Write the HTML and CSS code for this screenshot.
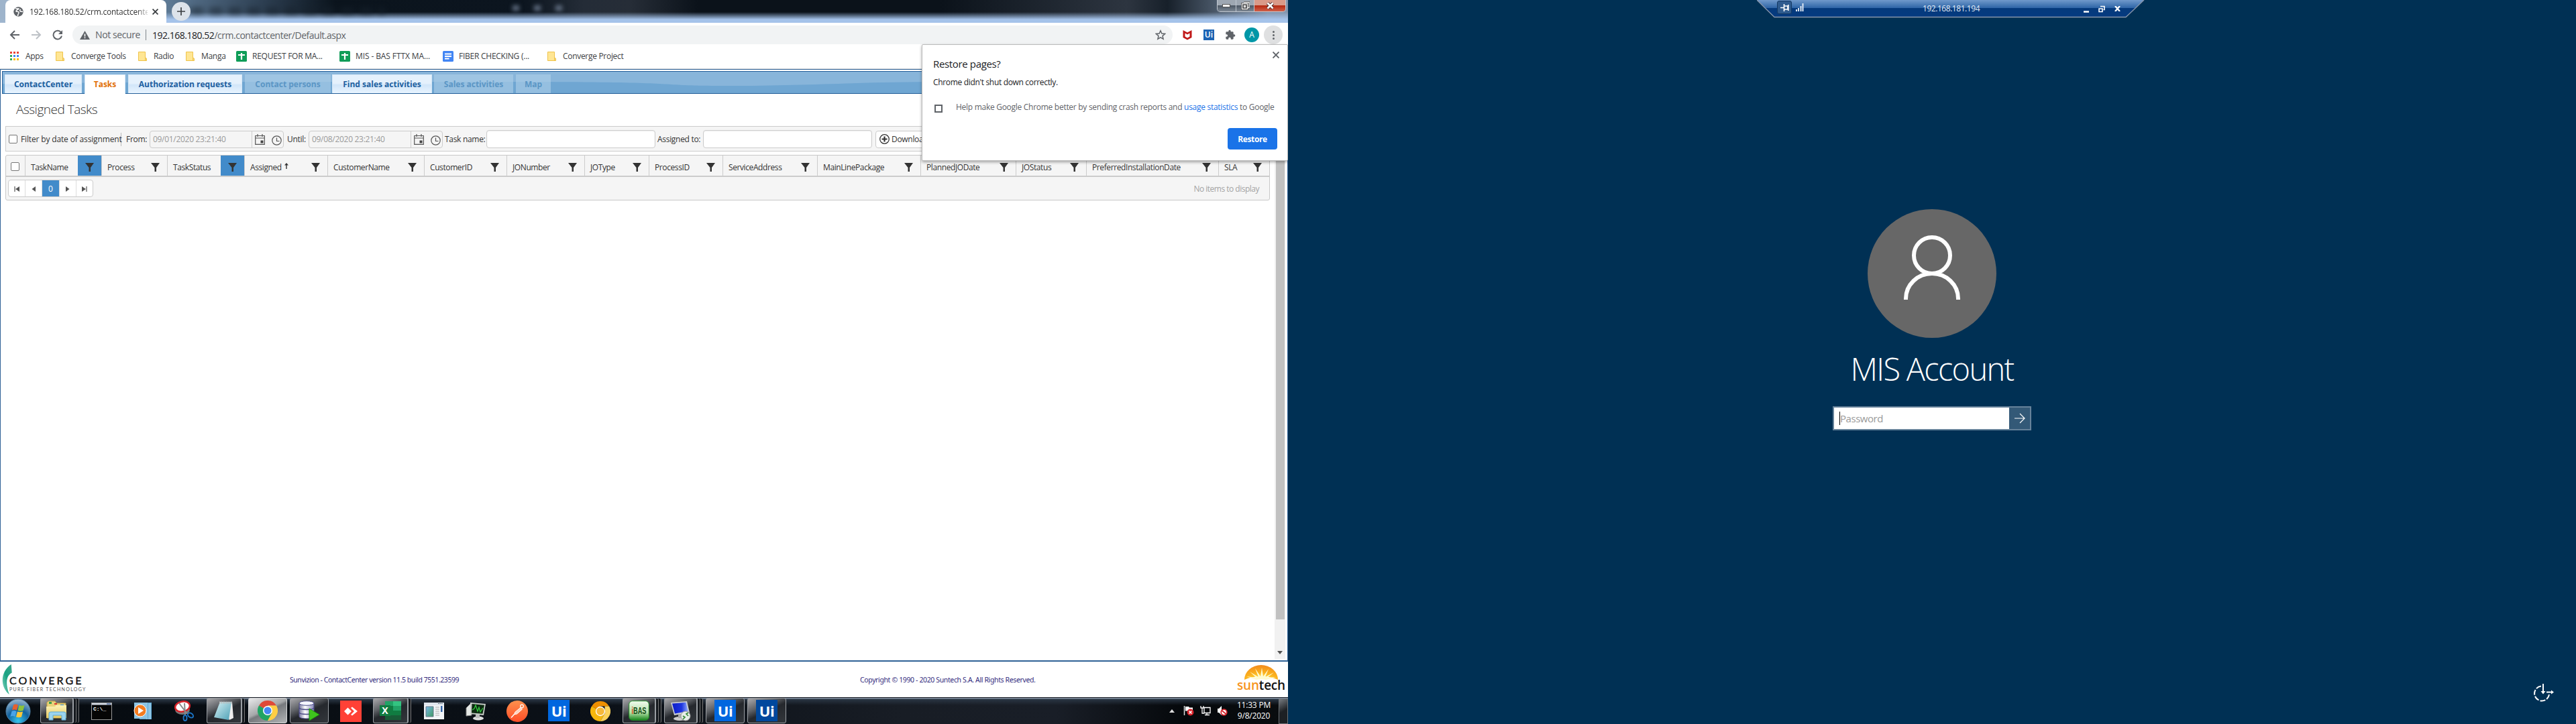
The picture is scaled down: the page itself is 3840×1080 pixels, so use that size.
FILE: index.html
```html
<!DOCTYPE html>
<html lang="en">
<head>
<meta charset="utf-8">
<title>ContactCenter</title>
<link rel="stylesheet" href="styles.css">
</head>
<body>
<svg class="defs" width="0" height="0" aria-hidden="true">
  <defs>
    <linearGradient id="folderGrad" x1="0" y1="0" x2="0" y2="1"><stop offset="0" stop-color="#fdf3b8"/><stop offset="1" stop-color="#e5c860"/></linearGradient>
    <linearGradient id="blueGrad" x1="0" y1="0" x2="1" y2="1"><stop offset="0" stop-color="#7ab7e8"/><stop offset="1" stop-color="#3f9b62"/></linearGradient>
    <linearGradient id="padGrad" x1="0" y1="0" x2="1" y2="1"><stop offset="0" stop-color="#d8f2f5"/><stop offset="1" stop-color="#4b9fb5"/></linearGradient>
    <linearGradient id="dbGrad"><stop offset="0" stop-color="#77779f"/><stop offset=".4" stop-color="#fff"/><stop offset="1" stop-color="#8484b5"/></linearGradient>
    <linearGradient id="orangeGrad" x1="0" y1="0" x2="0" y2="1"><stop offset="0" stop-color="#ff914d"/><stop offset="1" stop-color="#ff4d27"/></linearGradient>
    <linearGradient id="ibasGrad" x1="0" y1="0" x2="0" y2="1"><stop offset="0" stop-color="#f2fbee"/><stop offset=".6" stop-color="#b5e0a8"/><stop offset="1" stop-color="#16851b"/></linearGradient>
    <linearGradient id="screenGrad"><stop offset="0" stop-color="#0b1cc8"/><stop offset=".6" stop-color="#1d35df"/><stop offset="1" stop-color="#8fa8ff"/></linearGradient>
    <linearGradient id="leafGrad" x1="1" y1="0" x2="0" y2="1"><stop offset="0" stop-color="#3aa58c"/><stop offset=".5" stop-color="#1aa383"/><stop offset="1" stop-color="#8fd8c5"/></linearGradient>
    <radialGradient id="orbGrad" cx=".5" cy=".9" r=".9"><stop offset="0" stop-color="#35c4ea"/><stop offset=".5" stop-color="#12629f"/><stop offset="1" stop-color="#9fb9cf"/></radialGradient>
    <radialGradient id="sunGrad" cx=".5" cy="1" r="1"><stop offset="0" stop-color="#ffe94a"/><stop offset=".5" stop-color="#fbb01e"/><stop offset="1" stop-color="#f28a1c"/></radialGradient>
    <symbol id="funnel" viewBox="0 0 13 13"><path d="M0 0h13L8 7v6H5.5V7z" fill="#333"/></symbol>
    <symbol id="folder" viewBox="0 0 13 14"><path d="M.5.5h10v9l2 1v3H.5z" fill="#ffe694" stroke="#efc34a"/><path d="M10.500 13V9.500h1.500V13" fill="#fff0b0" stroke="#efc34a"/></symbol>
    <symbol id="sheet" viewBox="0 0 16 16"><rect width="16" height="16" rx="1.500" fill="#0f9d58"/><path d="M3 6h10M8 3v10" stroke="#fff" stroke-width="2.200"/></symbol>
    <symbol id="cal" viewBox="0 0 15 16"><path d="M.7 2.500h13.600v12.800H.7zM.7 6h13.600M4 0v4M11 0v4" fill="none" stroke="#555" stroke-width="1.200"/><path d="M8.500 9.500h4v4h-4z" fill="#444"/></symbol>
    <symbol id="clk" viewBox="0 0 15 15"><circle cx="7.500" cy="7.500" r="6.700" fill="none" stroke="#555" stroke-width="1.200"/><path d="M7.500 3.500v5h4" fill="none" stroke="#555" stroke-width="1.200"/></symbol>
  </defs>
</svg>

<main class="desktop">
<section class="left-monitor">
  <header class="titlebar">
    <div class="tab">
      <svg class="favicon" viewBox="0 0 15 15"><circle cx="7.500" cy="7.500" r="7.200" fill="#5f6368"/><path d="M3 2.500C5 4 6.500 2 8 3.200 6 5 3.500 5 4 7c2 .5 4.500 0 4 2.500-1 1.500-1.500 2-1.500 4.500M11 4c-1.500 1-2 2-.5 3 1.500.5 2.500 0 3.500.5" fill="none" stroke="#fff" stroke-width="1.500"/></svg>
      <span class="tab-title">192.168.180.52/crm.contactcente</span>
      <svg class="tab-x" viewBox="0 0 8 8"><path d="M.5.5l7 7M7.500.5l-7 7" stroke="#3c4043" stroke-width="1.600"/></svg>
    </div>
    <div class="newtab"><svg width="12" height="12" viewBox="0 0 12 12"><path d="M6 0v12M0 6h12" stroke="#3c4043" stroke-width="1.700"/></svg></div>
    <div class="ghost"></div>
    <div class="ghost-controls"><i></i><i></i><i></i></div>
    <div class="wincontrols">
      <span class="wc min"><svg width="13" height="5"><rect x=".5" y=".5" width="11" height="4" fill="#fff" stroke="#555"/></svg></span>
      <span class="wc max"><svg width="13" height="13"><path d="M4 1.500h8v8h-2M1.500 3.500h8v8h-8zM4.500 6.500h2v2h-2z" fill="none" stroke="#444" stroke-width="2.800"/><path d="M4 1.500h8v8h-2M1.500 3.500h8v8h-8zM4.500 6.500h2v2h-2z" fill="none" stroke="#eee" stroke-width="1.300"/></svg></span>
      <span class="wc close"><svg width="13" height="11" viewBox="0 0 13 11"><path d="M2.500 1.500l8 8M10.500 1.500l-8 8" stroke="#4b2a2a" stroke-width="4.600"/><path d="M2.500 1.500l8 8M10.500 1.500l-8 8" stroke="#fff" stroke-width="2.800"/></svg></span>
    </div>
  </header>

  <div class="toolbar">
    <svg class="nav-ico" viewBox="0 0 16 16"><path d="M15 8H2M8 2L2 8l6 6" fill="none" stroke="#5f6368" stroke-width="2"/></svg>
    <svg class="nav-ico" viewBox="0 0 16 16"><path d="M1 8h13M8 2l6 6-6 6" fill="none" stroke="#bdc1c6" stroke-width="2"/></svg>
    <svg class="nav-ico" viewBox="0 0 16 16"><path d="M13 4.500A6.300 6.300 0 1 0 14 9.500" fill="none" stroke="#5f6368" stroke-width="2"/><path d="M15 1v6H9z" fill="#5f6368"/></svg>
    <div class="omnibox">
      <svg class="warn" viewBox="0 0 15 13"><path d="M7.500 0L15 13H0z" fill="#5f6368"/><path d="M7.500 4.500v4M7.500 9.500v1.700" stroke="#fff" stroke-width="1.600"/></svg>
      <span class="notsecure">Not secure</span>
      <span class="url"><b>192.168.180.52</b>/crm.contactcenter/Default.aspx</span>
      <svg class="star" viewBox="0 0 16 16"><path d="M8 1.800l1.900 4.300 4.700.4-3.600 3.100 1.100 4.600L8 11.800l-4.100 2.400L5 9.600 1.400 6.500l4.700-.4z" fill="none" stroke="#5f6368" stroke-width="1.500"/></svg>
    </div>
    <svg class="ext" viewBox="0 0 16 16"><path d="M1.500 1l6.500 3.500L14.500 1v11L8 15.500 1.500 12z" fill="#c01818"/><path d="M4.500 5.500L8 7.500l3.500-2v5L8 12.500l-3.500-2z" fill="#fff"/></svg>
    <span class="ext ui-sm">Ui</span>
    <svg class="ext" viewBox="0 0 24 24"><path d="M20.500 11H19V7a2 2 0 0 0-2-2h-4V3.500a2.500 2.500 0 0 0-5 0V5H4a2 2 0 0 0-2 2v3.800h1.500a2.700 2.700 0 0 1 0 5.400H2V20a2 2 0 0 0 2 2h3.800v-1.500a2.700 2.700 0 0 1 5.400 0V22H17a2 2 0 0 0 2-2v-4h1.500a2.500 2.500 0 0 0 0-5z" fill="#5f6368"/></svg>
    <span class="avatar">A</span>
    <span class="menu"><i></i><i></i><i></i></span>
  </div>

  <nav class="bookmarks">
    <span class="bm b-apps"><svg width="13" height="13" viewBox="0 0 13 13"><path d="M0 0h3v3H0zM5 0h3v3H5zM10 0h3v3h-3z" fill="#ea4335"/><path d="M0 5h3v3H0zM0 10h3v3H0z" fill="#34a853"/><path d="M5 5h3v3H5z" fill="#4285f4"/><path d="M10 5h3v3h-3z" fill="#4285f4"/><path d="M5 10h3v3H5zM10 10h3v3h-3z" fill="#fbbc05"/></svg><span>Apps</span></span>
    <span class="bm b-tools"><svg width="13" height="14"><use href="#folder"/></svg><span>Converge Tools</span></span>
    <span class="bm b-radio"><svg width="13" height="14"><use href="#folder"/></svg><span>Radio</span></span>
    <span class="bm b-manga"><svg width="13" height="14"><use href="#folder"/></svg><span>Manga</span></span>
    <span class="bm doc b-req"><svg width="16" height="16"><use href="#sheet"/></svg><span>REQUEST FOR MA...</span></span>
    <span class="bm doc b-mis"><svg width="16" height="16"><use href="#sheet"/></svg><span>MIS - BAS FTTX MA...</span></span>
    <span class="bm doc b-fib"><svg width="16" height="16" viewBox="0 0 16 16"><rect width="16" height="16" rx="1.500" fill="#4285f4"/><path d="M3 4.500h10M3 8h10M3 11.500h6.500" stroke="#fff" stroke-width="1.800"/></svg><span>FIBER CHECKING (...</span></span>
    <span class="bm b-proj"><svg width="13" height="14"><use href="#folder"/></svg><span>Converge Project</span></span>
  </nav>

  <div class="page">
    <nav class="tabs">
      <svg class="wave" viewBox="0 0 1916 32" preserveAspectRatio="none"><path d="M0 18C250 14 480 15 760 15S960 21 1080 21 1280 15 1400 15s300 4 520 3V33H0z" fill="#6fa6d2"/></svg>
      <a class="t-cc">ContactCenter</a><a class="t-tasks active">Tasks</a><a class="t-auth">Authorization requests</a><a class="t-cp off">Contact persons</a><a class="t-find">Find sales activities</a><a class="t-sales off">Sales activities</a><a class="t-map off">Map</a>
    </nav>
    <div class="workspace">
      <div class="content">
        <h1>Assigned Tasks</h1>
        <div class="filterbar">
          <i class="check"></i><span class="f-date">Filter by date of assignment</span>
          <span class="f-from">From:</span>
          <span class="datebox"><span class="val">09/01/2020 23:21:40</span><svg width="15" height="16"><use href="#cal"/></svg><svg width="15" height="15"><use href="#clk"/></svg></span>
          <span class="f-until">Until:</span>
          <span class="datebox"><span class="val">09/08/2020 23:21:40</span><svg width="15" height="16"><use href="#cal"/></svg><svg width="15" height="15"><use href="#clk"/></svg></span>
          <span class="f-task">Task name:</span><span class="textbox"></span>
          <span class="f-ass">Assigned to:</span><span class="textbox"></span>
          <span class="download"><svg width="15" height="15" viewBox="0 0 15 15"><circle cx="7.500" cy="7.500" r="6.800" fill="none" stroke="#333" stroke-width="1.300"/><path d="M7.500 3.500v8M3.500 7.500h8" stroke="#333" stroke-width="2.200"/></svg>Download</span>
        </div>
        <div class="grid">
          <div class="grid-head">
            <div class="c0"><i class="check"></i></div>
            <div class="on">TaskName<span><svg><use href="#funnel"/></svg></span></div>
            <div>Process<span><svg><use href="#funnel"/></svg></span></div>
            <div class="on">TaskStatus<span><svg><use href="#funnel"/></svg></span></div>
            <div>Assigned<svg class="sort" viewBox="0 0 6 9"><path d="M3 0L6 3.500H3.700V9H2.300V3.500H0z" fill="#333"/></svg><span><svg><use href="#funnel"/></svg></span></div>
            <div>CustomerName<span><svg><use href="#funnel"/></svg></span></div>
            <div>CustomerID<span><svg><use href="#funnel"/></svg></span></div>
            <div>JONumber<span><svg><use href="#funnel"/></svg></span></div>
            <div>JOType<span><svg><use href="#funnel"/></svg></span></div>
            <div>ProcessID<span><svg><use href="#funnel"/></svg></span></div>
            <div>ServiceAddress<span><svg><use href="#funnel"/></svg></span></div>
            <div>MainLinePackage<span><svg><use href="#funnel"/></svg></span></div>
            <div>PlannedJODate<span><svg><use href="#funnel"/></svg></span></div>
            <div>JOStatus<span><svg><use href="#funnel"/></svg></span></div>
            <div>PreferredInstallationDate<span><svg><use href="#funnel"/></svg></span></div>
            <div>SLA<span><svg><use href="#funnel"/></svg></span></div>
          </div>
          <div class="pager">
            <div class="pages">
              <b><svg viewBox="0 0 8 8"><path d="M1 0v8" stroke="#555" stroke-width="1.200"/><path d="M8 0v8L2 4z" fill="#555"/></svg></b>
              <b><svg viewBox="0 0 8 8"><path d="M7 0v8L1.500 4z" fill="#555"/></svg></b>
              <b class="cur">0</b>
              <b><svg viewBox="0 0 8 8"><path d="M1 0v8l5.500-4z" fill="#555"/></svg></b>
              <b><svg viewBox="0 0 8 8"><path d="M7 0v8" stroke="#555" stroke-width="1.200"/><path d="M0 0v8l6-4z" fill="#555"/></svg></b>
            </div>
            <span class="empty">No items to display</span>
          </div>
        </div>
      </div>
      <div class="scrollbar"><i class="thumb"></i><i class="down"></i></div>
    </div>
  </div>

  <footer class="sitefoot">
    <div class="converge">
      <svg viewBox="0 0 18 48"><path d="M15 0L16 13C8 17 5 28 12 47 -2 36-3 12 15 0z" fill="url(#leafGrad)"/></svg>
      <div><b>CONVERGE</b><small>PURE FIBER TECHNOLOGY</small></div>
    </div>
    <span class="version">Sunvizion - ContactCenter version 11.5 build 7551.23599</span>
    <span class="copy">Copyright © 1990 - 2020 Suntech S.A. All Rights Reserved.</span>
    <div class="suntech">
      <svg width="52" height="24" viewBox="0 0 52 24"><path d="M1 22A25 22 0 0 1 51 22Q40 17 26 17T1 22z" fill="url(#sunGrad)"/><path d="M4 17l15 2L9 10l13 8-5-13 8 12 2-13 2 13 8-11-5 12 13-7-10 8 13-1-15 4q-7-2-14 0z" fill="#fffbd0"/></svg>
      <div class="word"><em>sun</em>tech</div>
    </div>
  </footer>

  <div class="taskbar">
    <div class="start"><svg width="38" height="38" viewBox="0 0 38 38"><circle cx="19" cy="19" r="18" fill="url(#orbGrad)" stroke="#4d7fa5"/><path d="M12 9.500q3-2 7 0l-2 8q-4-2-7 0z" fill="#e8602c"/><path d="M20.500 10q4 1.500 8 0l-2 8q-4 1.500-8 0z" fill="#8cc43c"/><path d="M9.500 19q4-2 7 0l-2 8q-4-2-7 0z" fill="#4aa3e8"/><path d="M18 19.500q4 1.500 8 0l-2 8q-4 1.500-8 0z" fill="#fcc73a"/></svg></div>
    <div class="slot"><span class="btn stack s2"><svg width="33" height="30" viewBox="0 0 33 30"><path d="M2 3l2-2h10l2 3h14v22H2z" fill="#e9d27a" stroke="#c7a545"/><path d="M5 2h4v3H5z" fill="#3aa04a"/><path d="M13 4h4v2h-4z" fill="#d33"/><path d="M22 6h5v3h-5z" fill="#2a86d8"/><path d="M1 9h13l2-2h15v19H1z" fill="url(#folderGrad)"/><path d="M5 29V19q0-2 3-2h19q3 0 3 2v10h-6v-7H11v7z" fill="#9bd4f0" stroke="#5ca9d3"/></svg></span></div>
    <div class="slot"><span class="ico"><svg width="31" height="26" viewBox="0 0 31 26"><rect x=".5" y=".5" width="30" height="25" fill="#050505" stroke="#999"/><path d="M1 1h29v2.500H1z" fill="#d5dbe5"/><path d="M23 1h6v2h-6z" fill="#7289b5"/><text x="3" y="12" class="prompt">C:\_</text></svg></span></div>
    <div class="slot"><span class="ico"><svg width="28" height="27" viewBox="0 0 28 27"><path d="M9 1h18v25H9z" fill="#5fa8d3"/><path d="M20 1v25M23 2v24M25 2v24" stroke="#bfe2f5"/><path d="M1 1h18v24H1z" fill="#8cc3e2"/><circle cx="10" cy="13" r="9" fill="#f37c20" stroke="#fff"/><path d="M7 8l8 5-8 5z" fill="#fff"/></svg></span></div>
    <div class="slot"><span class="ico"><svg width="30" height="32" viewBox="0 0 30 32"><ellipse cx="12" cy="14" rx="11" ry="7" fill="#777"/><ellipse cx="12" cy="9" rx="11" ry="7.500" fill="#fff" stroke="#d8232a" stroke-width="2.500" transform="rotate(-12 12 9)"/><path d="M7 4l12 16M15 4l1 17" stroke="#888" stroke-width="2"/><ellipse cx="16" cy="26" rx="2.500" ry="4" fill="none" stroke="#1b74c4" stroke-width="2"/><ellipse cx="24" cy="22" rx="4.500" ry="3" fill="none" stroke="#1b74c4" stroke-width="2" transform="rotate(35 24 22)"/></svg></span></div>
    <div class="slot"><span class="btn stack"><svg width="32" height="30" viewBox="0 0 32 30"><path d="M10 2h18l2 24-6 3z" fill="#eee"/><path d="M10 2h17L23 29 1 25z" fill="url(#padGrad)"/><path d="M9 3h19" stroke="#bbb" stroke-width="3" stroke-dasharray="1.500 1"/></svg></span></div>
    <div class="slot"><span class="btn lit"><svg width="30" height="30" viewBox="0 0 30 30"><path d="M15 15L2 7.500A15 15 0 0 1 28 7.500H15z" fill="#df4938"/><path d="M2 7.500A15 15 0 0 0 15 30l6.500-11.500L15 15z" fill="#21a464"/><path d="M28 7.500A15 15 0 0 1 15 30l6.500-11.500L15 7.500z" fill="#ffce44"/><circle cx="15" cy="15" r="7" fill="#fff"/><circle cx="15" cy="15" r="5.500" fill="#4587f3"/></svg></span></div>
    <div class="slot"><span class="btn"><svg width="32" height="31" viewBox="0 0 32 31"><path d="M1 4v20c0 4 22 4 22 0V4z" fill="url(#dbGrad)" stroke="#4b4b85"/><ellipse cx="12" cy="4" rx="11" ry="3.300" fill="#f5f5ff" stroke="#4b4b85"/><path d="M1 10.500c0 4 22 4 22 0M1 17.500c0 4 22 4 22 0" fill="none" stroke="#4b4b85" stroke-width="1.500"/><path d="M16 12l15 9-15 9z" fill="#3fc51d" stroke="#1d8a0c"/></svg></span></div>
    <div class="slot"><span class="ico"><svg width="32" height="32" viewBox="0 0 32 32"><path d="M0 0h32v32H0z" fill="#ff4136"/><path d="M11.500 10.500l5.500 5.500-5.500 5.500L6 16zM16 11l2-1.500 8 6.500-8 6.500-2-1.500 5-5z" fill="#fff"/></svg></span></div>
    <div class="slot"><span class="btn stack"><svg width="32" height="28" viewBox="0 0 32 28"><path d="M8 0h24v28H8z" fill="#185c37"/><path d="M8 0h12v7H8z" fill="#21a366"/><path d="M20 0h12v7H20z" fill="#33c481"/><path d="M8 7h12v14H8z" fill="#107c41"/><path d="M20 7h12v7H20z" fill="#21a366"/><path d="M20 14h12v7H20z" fill="#107c41"/><path d="M0 6h16v16H0z" fill="#107c41"/><text x="8" y="19" class="xl">X</text></svg></span></div>
    <div class="slot"><span class="ico"><svg width="30" height="25" viewBox="0 0 30 25"><path d="M0 0h30v25H0z" fill="#f2f5f8"/><path d="M0 0h30v4H0z" fill="#dfe5ed"/><path d="M21 1.500h7" stroke="#456" stroke-dasharray="1.500 1"/><path d="M3 6h11v15H3z" fill="url(#blueGrad)" stroke="#678"/><path d="M17 7h6M17 10h6M17 13h6M17 16h6M17 19h6" stroke="#aaa"/><path d="M25 5h2.500v9H25z" fill="#3465a8"/></svg></span></div>
    <div class="slot"><span class="ico"><svg width="31" height="28" viewBox="0 0 31 28"><path d="M1 9l8-8v19l-8 1z" fill="#e5e8e5" stroke="#888"/><path d="M7 1l23 2-3 17-20-2z" fill="#c8cdc8"/><path d="M9.500 3L28 4.800l-2.500 13L9 16.500z" fill="#0c2a10"/><path d="M10 12l3-2 2-5 3 9 2-6 2 7 4-6" fill="none" stroke="#35d040" stroke-width="1.200"/><ellipse cx="19" cy="24.500" rx="8" ry="3" fill="#ddd"/><path d="M15 19h6v5h-6z" fill="#bbb"/></svg></span></div>
    <div class="slot"><span class="ico"><svg width="32" height="32" viewBox="0 0 32 32"><circle cx="16" cy="16" r="16" fill="url(#orangeGrad)"/><circle cx="23" cy="8.500" r="2.300" fill="none" stroke="#fff" stroke-width="1.200"/><path d="M21 10.500l2.500 2.500-8 7-3.500.5.500-3z" fill="#ffd2be" stroke="#fff"/><path d="M12 20l-5 5.500" stroke="#fff" stroke-width="1.500"/></svg></span></div>
    <div class="slot"><span class="ico uip">Ui</span></div>
    <div class="slot"><span class="ico"><svg width="30" height="30" viewBox="0 0 30 30"><path d="M15 15L2 7.500A15 15 0 0 1 28 7.500H15z" fill="#ee8f00"/><path d="M2 7.500A15 15 0 0 0 15 30l6.500-11.500L15 15z" fill="#f6b70c"/><path d="M28 7.500A15 15 0 0 1 15 30l6.500-11.500V7.500z" fill="#fbd25c"/><circle cx="15" cy="15" r="6.500" fill="#f6b93a" stroke="#fff" stroke-width="1.300"/></svg></span></div>
    <div class="slot"><span class="btn stack s2"><svg width="31" height="30" viewBox="0 0 31 30"><rect x=".7" y=".7" width="29.600" height="28.600" rx="5" fill="url(#ibasGrad)" stroke="#1f8b24"/><text x="4.500" y="20" class="ibas" textLength="22" lengthAdjust="spacingAndGlyphs"><tspan class="red">i</tspan>BAS</text></svg></span></div>
    <div class="slot"><span class="btn stack s2"><svg width="31" height="31" viewBox="0 0 31 31"><path d="M1 3L25 1l4 17-23 4z" fill="#c9cdd4"/><path d="M3 4.500l20.500-1.700L26.500 16 7 19.500z" fill="url(#screenGrad)"/><ellipse cx="14" cy="27" rx="9" ry="3" fill="#ccc"/><path d="M12 20h5v6h-5z" fill="#aaa"/><circle cx="23" cy="23" r="7" fill="#e8eee8" stroke="#999"/><path d="M19 23l3 2-3 3M27 18l-3 2 3 3" fill="none" stroke="#3a8a3a" stroke-width="1.700"/></svg></span></div>
    <div class="slot"><span class="btn"><span class="uip">Ui</span></span></div>
    <div class="slot"><span class="btn"><span class="uip dark">Ui</span></span></div>
    <div class="tray">
      <svg width="8" height="5" viewBox="0 0 8 5"><path d="M4 0l4 5H0z" fill="#ddd"/></svg>
      <svg width="16" height="16" viewBox="0 0 16 16"><path d="M1.500 1v14" stroke="#ddd" stroke-width="1.500"/><path d="M3 2h5l1 1.500h5V10H8L7 8.500H3z" fill="#fff"/><circle cx="10.500" cy="10.500" r="5" fill="#d8232a"/><path d="M8.500 8.500l4 4M12.500 8.500l-4 4" stroke="#fff" stroke-width="1.500"/></svg>
      <svg width="16" height="16" viewBox="0 0 16 16"><path d="M1 1v3h4V1M3 4v8h3M6 3.500h9v8H6zM10 12v2M7 14.500h7" fill="none" stroke="#fff" stroke-width="1.300"/></svg>
      <svg width="16" height="16" viewBox="0 0 16 16"><path d="M1 5h2l4-4v14l-4-4H1z" fill="#fff"/><circle cx="10.500" cy="10.500" r="4.300" fill="#fff" stroke="#d8232a" stroke-width="1.800"/><path d="M7.500 8l6 5" stroke="#d8232a" stroke-width="1.700"/></svg>
      <div class="clock"><span>11:33 PM</span><span>9/8/2020</span></div>
      <i class="showdesk"></i>
    </div>
  </div>

  <aside class="restore">
    <svg class="rx" viewBox="0 0 10 10"><path d="M.5.5l9 9M9.500.5l-9 9" stroke="#5f6368" stroke-width="1.900"/></svg>
    <h2>Restore pages?</h2>
    <p>Chrome didn't shut down correctly.</p>
    <label><i></i><span>Help make Google Chrome better by sending crash reports and <a>usage statistics</a> to Google</span></label>
    <button>Restore</button>
  </aside>
</section>

<section class="right-monitor">
  <div class="rdpbar">
    <svg class="rdpshape" viewBox="0 0 578 27"><defs><linearGradient id="rdpG" x1="0" y1="0" x2="0" y2="1"><stop offset="0" stop-color="#7099cb"/><stop offset=".47" stop-color="#2d64a6"/><stop offset=".48" stop-color="#053a7c"/><stop offset="1" stop-color="#053a80"/></linearGradient></defs><path d="M0 0l26 25.500h524L577 0" fill="url(#rdpG)" stroke="#8795aa" stroke-width="1.300"/></svg>
    <span class="pin"><svg width="13" height="11" viewBox="0 0 13 11"><path d="M0 5.500h5M5.500 0v11M6 3h5v5H6M11.800 1v9" fill="none" stroke="#fff" stroke-width="1.700"/></svg></span>
    <svg class="signal" width="12" height="12" viewBox="0 0 12 12"><path d="M1 12V9M4 12V7M7.500 12V4M10.500 12V0" stroke="#dde6f2" stroke-width="2"/></svg>
    <span class="ip">192.168.181.194</span>
    <span class="rdpctl"><svg width="8" height="3"><path d="M0 1.500h8" stroke="#fff" stroke-width="2.500"/></svg><svg width="10" height="11" viewBox="0 0 10 11"><path d="M3 1.500h6v5H7.500M1 5h5v4.500H1z" fill="none" stroke="#fff" stroke-width="1.600"/></svg><svg width="9" height="8" viewBox="0 0 9 8"><path d="M1 0l7 8M8 0L1 8" stroke="#fff" stroke-width="2.300"/></svg></span>
  </div>
  <div class="login">
    <svg class="person" viewBox="0 0 192 192"><circle cx="96" cy="96" r="96" fill="#676767"/><g fill="none" stroke="#fff" stroke-width="6"><circle cx="96" cy="69" r="27"/><path d="M57 135V133.500a39 37.500 0 0 1 78 0V135"/></g></svg>
    <div class="name">MIS Account</div>
    <div class="pw"><span class="field"><i></i>Password</span><span class="go"><svg width="16" height="16" viewBox="0 0 16 16"><path d="M0 8h15M8 1l7 7-7 7" fill="none" stroke="#fff" stroke-width="1.200"/></svg></span></div>
  </div>
  <svg class="ease" viewBox="0 0 32 28"><path d="M24 16A11 11 0 1 1 12 3.500" fill="none" stroke="#fff" stroke-width="2" stroke-dasharray="8 2.200"/><path d="M15 0v12" stroke="#fff" stroke-width="2"/><path d="M11.500 11h7L15 15.500zM27 9.500v6l4-3z" fill="#fff"/><path d="M20 12.500h8" stroke="#fff" stroke-width="2"/></svg>
</section>
</main>
</body>
</html>
```
FILE: styles.css
```css
* { box-sizing: border-box; }
body { margin: 0; font-family: "Open Sans", "Noto Sans", sans-serif; font-size: 12px; color: #333; overflow: hidden; }
i, em { font-style: normal; }
svg { display: block; flex: none; }
.defs { position: absolute; }
.desktop { display: flex; width: 3840px; height: 1080px; white-space: nowrap; }
.left-monitor { position: relative; display: flex; flex-direction: column; width: 1920px; height: 1080px; background: #fff; }

/* Window frame */
.titlebar { position: relative; display: flex; height: 34px; padding-left: 8px; background:
  radial-gradient(ellipse 60px 60px at 0 10px, #9eb4cb 30%, transparent),
  linear-gradient(transparent 18px, #a5c3ea 29px),
  linear-gradient(90deg, #8ba2bb 0, #5d7994 250px, #2e4053 390px, #0b141d 500px, #0c151f 780px, #242c37 870px, #262d37 940px, #0b121a 1040px, #0b121a 1400px, #2d3540 1680px, #17202a 1740px, #8295ad 1890px); }
.tab { display: flex; align-items: center; width: 240px; padding-left: 12px; background: #fff; border-radius: 8px 8px 0 0; }
.favicon { width: 15px; height: 15px; }
.tab-title { width: 176px; margin-left: 9px; letter-spacing: -.25px; -webkit-mask-image: linear-gradient(90deg, #000 160px, transparent 180px); }
.tab-x { width: 9px; height: 9px; margin-left: 7px; }
.newtab { display: flex; align-items: center; justify-content: center; width: 28px; height: 28px; margin: 3px 0 0 8px; border-radius: 50%; background: #dde3ea; z-index: 1; }
.ghost { width: 290px; height: 10px; margin: 11px 0 0 0; background: repeating-linear-gradient(90deg, #17222d 0 17px, transparent 22px 28px); filter: blur(4px); opacity: .55; }
.ghost-controls { display: flex; gap: 22px; margin: 8px 0 0 190px; filter: blur(3px); }
.ghost-controls i { width: 10px; height: 8px; background: #8192a8; opacity: .7; }
.wincontrols { display: flex; width: 103px; height: 18px; margin: 0 3px 0 auto; border: 1px solid #c0c7d0; border-top: 0; border-radius: 0 0 5px 5px; overflow: hidden; }
.wc { display: flex; align-items: center; justify-content: center; width: 28px; background: linear-gradient(#9ea7b2 45%, #4e5966 50%, #7d8895); border-right: 1px solid #c0c7d0; }
.wc.max { width: 27px; padding-bottom: 1px; }
.wc.close { flex: 1; border: 0; background: linear-gradient(#d99a89 45%, #b62b13 50%, #d0604a); }

.toolbar { display: flex; align-items: center; height: 36px; padding-left: 14px; }
.toolbar > * { flex: none; }
.nav-ico { width: 16px; height: 16px; margin-right: 16px; }
.omnibox { display: flex; align-items: center; width: 1640px; height: 28px; margin-left: -2px; padding: 0 10px 0 11px; margin-right: 14px; border-radius: 14px; background: #f1f3f4; font-size: 14px; color: #5f6368; }
.warn { width: 15px; height: 13px; }
.notsecure { width: 76px; margin-left: 8px; line-height: 16px; border-right: 1px solid #80868b; letter-spacing: -.4px; }
.url { margin-left: 9px; letter-spacing: -.48px; }
.url b { font-weight: 400; color: #202124; }
.star { width: 16px; height: 16px; margin-left: auto; }
.ext { width: 16px; height: 16px; margin-right: 16px; }
.ui-sm { background: #1c64b4; color: #fff; text-align: center; font: 600 12px/16px "Open Sans", sans-serif; }
.avatar { width: 22px; height: 22px; margin-left: -3px; border-radius: 50%; background: #0097a7; color: #fff; text-align: center; line-height: 22px; }
.menu { display: flex; flex-direction: column; align-items: center; justify-content: center; gap: 2px; width: 28px; height: 28px; margin-left: 7px; border-radius: 50%; background: #dfe0e1; }
.menu i { width: 3px; height: 3px; border-radius: 50%; background: #5f6368; }

.bookmarks { display: flex; align-items: center; height: 33px; padding: 0 0 5px 15px; border-bottom: 1px solid #d9dbde; color: #3c4043; letter-spacing: -.3px; }
.bm { display: flex; align-items: center; gap: 10px; }
.bm svg { width: 13px; }
.bm.doc { gap: 8px; }
.bm.doc svg { width: 16px; }
.b-apps { width: 68px; } .b-tools { width: 123px; } .b-radio { width: 71px; } .b-manga { width: 75px; }
.b-req { width: 154px; letter-spacing: -.25px; } .b-mis { width: 154px; letter-spacing: -.1px; } .b-fib { width: 156px; letter-spacing: -.25px; }

/* Web page */
.page { display: flex; flex-direction: column; height: 884px; border: solid #2f6296; border-width: 1px 1px 2px 1px; padding: 2px 0 0 2px; }
.tabs { position: relative; display: flex; align-items: flex-end; flex: none; height: 34px; padding-left: 3px; background: #88b5da; border: solid #245f99; border-width: 1px 0 1px 1px; font: 700 12px "Open Sans", sans-serif; color: #2060a0; }
.wave { position: absolute; inset: 0; width: 100%; height: 32px; }
.tabs a { position: relative; height: 28px; margin-right: 4px; text-align: center; line-height: 28px; background: linear-gradient(#e5f1fc 45%, #d2e6f9 55%, #e8f4ff); border: 1px solid #d6e8f7; border-bottom: 0; }
.tabs a.active { height: 29px; margin-bottom: -1px; background: #fff; color: #e17009; }
.tabs a.off { background: rgba(175, 208, 233, .6); border-color: transparent; color: #5b96c5; }
.t-cc { width: 115px; } .tabs .t-tasks { width: 61px; } .t-auth { width: 170px; } .tabs .t-cp { width: 128px; margin-right: 2px; } .tabs .t-find { width: 149px; margin-right: 3px; } .t-sales { width: 118px; } .t-map { width: 52px; }
.workspace { display: flex; flex: 1; }
.content { width: 1890px; padding: 5px 0 0 5px; flex: none; }
h1 { height: 43px; margin: 0; padding: 0 0 0 16px; font: 300 19px/36px "Open Sans", sans-serif; letter-spacing: -.5px; color: #333; }
.filterbar { display: flex; align-items: center; height: 38px; border: 1px solid #ccc; background: #f5f5f5; padding: 1px 0 0 4px; letter-spacing: -.3px; }
.filterbar > * { flex: none; }
.check { display: block; width: 13px; height: 13px; border: 1px solid #767676; border-radius: 2px; background: #fff; }
.f-date { width: 150px; margin-left: 5px; line-height: 20px; border-right: 1px solid #bbb; letter-spacing: -.15px; }
.f-from { width: 35px; margin-left: 7px; }
.datebox { display: flex; align-items: center; width: 200px; height: 26px; border: 1px solid #ccc; border-radius: 4px; color: #999; }
.datebox .val { width: 152px; line-height: 24px; padding-left: 4px; border-right: 1px solid #ccc; margin-right: 4px; }
.datebox svg + svg { margin-left: 10px; margin-top: 3px; }
.f-until { width: 32px; margin-left: 5px; }
.f-task { width: 62px; margin-left: 3px; }
.textbox { width: 252px; height: 27px; border: 1px solid #ccc; border-radius: 4px; background: #fff; box-shadow: inset 0 1px 2px #0001; }
.f-ass { width: 68px; margin-left: 3px; }
.download { display: flex; align-items: center; gap: 3px; width: 90px; height: 26px; margin-left: 5px; padding-left: 5px; border: 1px solid #ccc; border-radius: 4px; background: #fff; }
.grid { margin-top: 5px; height: 68px; border: 1px solid #c8c8c8; border-radius: 3px; background: #f5f5f5; }
.grid-head { display: grid; grid-template-columns: 29px 114px 98px 115px 124px 144px 123px 116px 96px 110px 141px 154px 142px 105px 197px 1fr; height: 32px; border-bottom: 2px solid #ccc; letter-spacing: -.4px; }
.grid-head > div { display: flex; align-items: center; padding: 4px 0 0 8px; border-right: 1px solid #ccc; }
.grid-head > div:last-child { border: 0; }
.grid-head > .c0 { padding: 2px 0 0 7px; }
.grid-head span { display: flex; align-items: center; justify-content: center; width: 35px; height: 30px; margin: -4px 0 0 auto; padding-top: 5px; }
.grid-head svg { width: 13px; height: 13px; }
.grid-head .sort { width: 6px; height: 9px; margin-left: 4px; margin-top: -4px; }
.grid-head .on span { background: #428bca; margin-right: 0; }
.pager { display: flex; align-items: center; justify-content: space-between; height: 34px; padding: 0 15px 0 3px; }
.pages { display: flex; width: 127px; height: 26px; border: 1px solid #ccc; border-radius: 4px; background: #fff; overflow: hidden; }
.pages b { display: flex; align-items: center; justify-content: center; flex: 1; border-right: 1px solid #ddd; padding-top: 2px; font-weight: 400; }
.pages b:last-child { border: 0; }
.pages svg { width: 8px; height: 8px; }
.pages .cur { background: #428bca; color: #fff; padding: 0; }
.empty { color: #a3a3a3; letter-spacing: -.5px; }
.scrollbar { display: flex; flex-direction: column; align-items: center; justify-content: space-between; width: 16px; margin: 0 0 2px 7px; padding-bottom: 7px; background: #f1f1f1; }
.thumb { width: 13px; height: 784px; background: #c1c1c1; }
.down { border: 4px solid transparent; border-top: 5px solid #505050; border-bottom: 0; }

.sitefoot { position: relative; display: flex; align-items: center; height: 53px; padding: 0 4px 0 2px; font: 10.5px "Noto Sans", sans-serif; color: #342d7e; }
.converge { display: flex; width: 430px; }
.converge > svg { width: 18px; height: 46px; }
.converge > div { display: flex; flex-direction: column; margin: 17px 0 0 -6px; }
.converge b { font: 400 16px/14px "Lato", sans-serif; letter-spacing: 3px; color: #111; -webkit-text-stroke: .4px #111; }
.converge small { font: 7px/9px "Lato", sans-serif; letter-spacing: 1.3px; color: #555; margin-top: 2px; }
.version { width: 850px; letter-spacing: -.45px; }
.copy { letter-spacing: -.37px; }
.suntech { display: flex; flex-direction: column; align-items: center; width: 72px; margin-left: auto; margin-top: -3px; }
.word { font: 600 19px/16px "Open Sans", sans-serif; color: #111; letter-spacing: -.2px; margin-top: -2px; height: 18px; }
.word em { color: #f7941e; }

/* Windows taskbar */
.taskbar { display: flex; height: 40px; background: linear-gradient(#11161e 1px, #8794a5 1px 2px, #2a3644 3px, transparent 12px), linear-gradient(90deg, #060b10, #0c1118 50%, #181d25 70%, #191e27 82%, #05080b 92%, #0a0d10); }
.start { width: 58px; padding: 2px 0 0 8px; }
.slot { width: 62px; padding: 1px 2px 0; }
.ico { display: flex; align-items: center; justify-content: center; height: 39px; }
.btn { position: relative; display: flex; align-items: center; justify-content: center; height: 38px; width: 58px; border: 1px solid #9a9ea3; border-radius: 3px; background: linear-gradient(155deg, #aaa9ac 0, #606368 32%, #25282d 52%, #33373c 100%); }
.btn.lit { background: linear-gradient(155deg, #e9e9ea, #a5a7a9 45%, #76797d 52%, #b2b4b6); border-color: #d8dadc; }
.stack { width: 53px; border-right-width: 2px; box-shadow: 4px 0 0 -1px #14181d, 5px 0 0 -1px #777; }
.stack.s2 { width: 50px; box-shadow: 4px 0 0 -1px #14181d, 5px 0 0 -1px #777, 8px 0 0 -1px #14181d, 9px 0 0 -1px #777; }
.prompt { font: 700 8px "Liberation Mono", monospace; fill: #fff; }
.xl { font: 700 14px "Open Sans", sans-serif; fill: #fff; text-anchor: middle; }
.ibas { font: 700 15px "Liberation Sans", sans-serif; fill: #134d16; }
.red { fill: #e04312; }
.uip { display: block; width: 32px; height: 32px; margin: 0 auto; background: #0067df; color: #fff; text-align: center; font: 700 22px/32px "Open Sans", sans-serif; letter-spacing: -.5px; }
.slot > .uip { margin-top: 3px; }
.uip.dark { background: #00489d; }
.tray { display: flex; align-items: center; margin-left: auto; color: #fff; }
.tray > svg { margin-right: 9px; }
.tray > svg:first-child { margin-right: 13px; }
.clock { display: flex; flex-direction: column; width: 64px; margin-left: 3px; text-align: center; line-height: 16px; letter-spacing: -.2px; padding-right: 10px; }
.showdesk { width: 14px; height: 38px; margin-top: 1px; border: 1px solid #6d7277; background: linear-gradient(150deg, #777b80, #1d2024 50%); }

/* Session restore bubble */
.restore { position: absolute; left: 1374px; top: 66px; width: 546px; height: 174px; padding: 18px 17px 0 16px; background: #fff; border: 1px solid #bbb; border-radius: 2px; box-shadow: 0 2px 4px #0005; color: #202124; }
.rx { position: absolute; right: 12px; top: 10px; width: 10px; height: 10px; }
.restore h2 { margin: 0; font: 400 15px/20px "Open Sans", sans-serif; letter-spacing: -.35px; }
.restore p { margin: 8px 0 0; line-height: 20px; letter-spacing: -.33px; }
.restore label { display: flex; align-items: center; margin-top: 17px; line-height: 20px; color: #5f6368; letter-spacing: -.28px; }
.restore label i { flex: none; width: 12px; height: 12px; margin: 4px 20px 0 2px; border: 2px solid #5f6368; }
.restore a { color: #1a73e8; }
.restore button { display: block; width: 74px; height: 32px; margin: 21px -2px 0 auto; padding: 0; border: 0; border-radius: 4px; background: #1a73e8; color: #fff; font: 700 12px "Open Sans", sans-serif; letter-spacing: -.4px; }

/* Remote desktop session */
.right-monitor { position: relative; display: flex; flex-direction: column; align-items: center; width: 1920px; background: #003054; color: #fff; }
.rdpbar { position: relative; display: flex; width: 578px; height: 27px; margin-left: 56px; color: #e3ebf5; }
.rdpshape { position: absolute; inset: 0; width: 578px; height: 27px; }
.rdpbar > :not(.rdpshape) { position: relative; }
.pin { display: flex; align-items: center; justify-content: center; width: 22px; height: 20px; margin: 1px 6px 0 30px; border: 1px solid #143862; border-radius: 3px; background: #2f5b8e; }
.signal { margin-top: 5px; }
.ip { width: 81px; margin: 4px 0 0 177px; letter-spacing: -.45px; }
.rdpctl { display: flex; align-items: center; gap: 14px; margin: 1px 0 0 159px; height: 24px; }
.rdpctl svg:first-child { margin-top: 9px; }
.login { display: flex; flex-direction: column; align-items: center; margin-top: 285px; }
.person { width: 192px; height: 192px; }
.name { height: 102px; font: 300 47px/92px "Open Sans", sans-serif; letter-spacing: -1.7px; }
.pw { display: flex; width: 296px; height: 36px; border: 2px solid #66829a; }
.field { display: flex; align-items: center; width: 261px; padding-left: 8px; background: #fff; color: #999; font-size: 15px; letter-spacing: -.45px; }
.field i { width: 1px; height: 20px; background: #000; }
.go { display: flex; flex: 1; align-items: center; justify-content: center; background: #335977; }
.ease { position: absolute; right: 32px; bottom: 32px; width: 32px; height: 28px; }
```
